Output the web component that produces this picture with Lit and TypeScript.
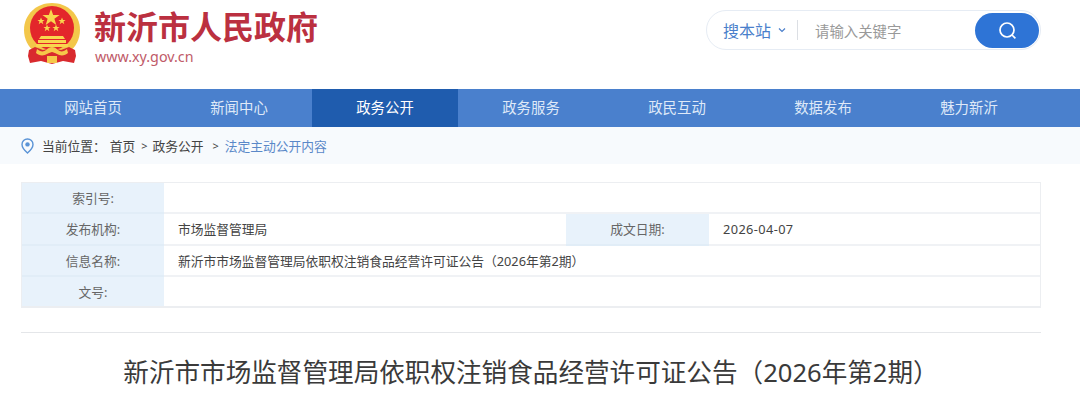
import { LitElement, html, css } from "lit";
import { customElement } from "lit/decorators.js";

const NAV = ["网站首页", "新闻中心", "政务公开", "政务服务", "政民互动", "数据发布", "魅力新沂"];

@customElement("app-root")
export class AppRoot extends LitElement {
  static styles = css`
    :host { display: block; width: 1080px; height: 400px; overflow: hidden; background: #fff;
      font-family: "Noto Sans", "Noto Sans CJK SC", sans-serif; color: #333; }
    .wrap { width: 1020px; margin-left: 21px; }
    .header { height: 89px; display: flex; justify-content: space-between; align-items: flex-start; }
    .brand { display: flex; gap: 13px; padding-top: 2px; }
    .emblem { width: 60px; height: 62px; display: block; }
    .brand-text { display: flex; flex-direction: column; }
    .name { font-family: "Noto Sans CJK SC", sans-serif; font-weight: 700; font-size: 32px; line-height: 44px; margin-top: 1px; color: #bb3040; white-space: nowrap; }
    .url { font-size: 14.3px; line-height: 18px; margin: 1px 0 0 1px; color: #c05a68; }
    .search { box-sizing: border-box; width: 335px; height: 40px; margin-top: 10px; border: 1px solid #e6ecf4; border-radius: 20px; display: flex; align-items: center; padding: 0 1px 0 16px; }
    .scope { font-size: 16px; color: #4a7fcb; white-space: nowrap; }
    .chev { width: 8px; height: 6px; margin: 0 11px 0 7px; }
    .sep { width: 1px; height: 20px; background: #dcdfe4; }
    .ph { flex: 1; font-size: 14.4px; color: #999; margin-left: 17px; }
    .btn { width: 64px; height: 35px; border-radius: 18px; background: #2e74d6; display: flex; align-items: center; justify-content: center; }
    .btn svg { width: 19px; height: 19px; }
    .nav { height: 38px; background: #4a80cd; }
    .nav-in { display: grid; grid-template-columns: repeat(7, 146px); padding-left: 20px; }
    .nav-item { height: 38px; line-height: 38px; text-align: center; font-size: 14.4px; color: #dfe9f8; }
    .nav-item.on { background: #1f5cae; color: #fff; }
    .crumb { height: 37px; background: #f7fafd; font-size: 12.75px; color: #444; }
    .crumb-in { height: 37px; display: flex; align-items: center; }
    .pin { width: 13px; height: 16px; margin-right: 8px; }
    .here { margin-right: 4px; }
    .arrow { margin: 0 5px 0 6px; font-size: 11px; }
    .arrow.wide { margin: 0 6px 0 9px; }
    .cur { color: #5a88c8; }
    .table { margin-top: 18px; border: 1px solid #eceef1; border-bottom-width: 2px; box-sizing: border-box; height: 126px; display: grid; grid-template-columns: 142px 402px 143px 1fr; grid-template-rows: 31px 32px 31px 29px; font-size: 12.75px; }
    .c { display: flex; align-items: center; border-bottom: 2px solid #f0f2f5; box-sizing: border-box; padding: 0 0 1px 14px; color: #444; white-space: nowrap; }
    .c.last { border-bottom: none; }
    .l { justify-content: center; padding: 0 0 1px; background: #e8f2fb; color: #666; border-bottom-color: #e1edf7; }
    .span3 { grid-column: span 3; }
    .date { letter-spacing: 0.4px; }
    .rule { height: 1px; background: #e4e6e9; margin-top: 24px; }
    h1 { margin: 20px 0 0; font-weight: 400; font-size: 25.6px; line-height: 40px; text-align: center; color: #3a3a3a; white-space: nowrap; }
  `;

  render() {
    return html`
      <div class="wrap header">
        <div class="brand">
          <svg class="emblem" viewBox="0 0 60 62">
            <path d="M31 1C16 1 3 12 3 28c0 9 4 17 11 22h34c7-5 11-13 11-22C59 12 46 1 31 1z" fill="#f3c74a"/>
            <circle cx="31" cy="26" r="22" fill="#e3262b"/>
            <polygon fill="#f9d64e" points="30,7 32.2,13 38.6,13 33.4,16.8 35.3,23 30,19.3 24.7,23 26.6,16.8 21.4,13 27.8,13"/>
            <polygon fill="#f9d64e" points="20,15.5 21,18 23.6,18 21.5,19.6 22.3,22.2 20,20.6 17.7,22.2 18.5,19.6 16.4,18 19,18"/>
            <polygon fill="#f9d64e" points="41,15.5 42,18 44.6,18 42.5,19.6 43.3,22.2 41,20.6 38.7,22.2 39.5,19.6 37.4,18 40,18"/>
            <polygon fill="#f9d64e" points="26,22.5 27,25 29.6,25 27.5,26.6 28.3,29.2 26,27.6 23.7,29.2 24.5,26.6 22.4,25 25,25"/>
            <polygon fill="#f9d64e" points="35,22.5 36,25 38.6,25 36.5,26.6 37.3,29.2 35,27.6 32.7,29.2 33.5,26.6 31.4,25 34,25"/>
            <path d="M20 34h22l2 3h-26zM17 38h28v3H17zM15 42h32v3H15z" fill="#f9d64e"/>
            <path d="M8 48l6-3 8 3 9-2 9 2 8-3 6 3 1 6-2 7-11-2-11 3-11-3-11 2-2-7z" fill="#d92a2e"/>
            <path d="M16 47c3 3 7 3 9 1 2-2 4-3 6-3s4 1 6 3c2 2 6 2 9-1l1 4c-3 3-8 3-11 1-2-1-4-2-5-2s-3 1-5 2c-3 2-8 2-11-1z" fill="#f6c94a"/>
            <rect x="26" y="54" width="10" height="7" fill="#f6c94a"/>
          </svg>
          <div class="brand-text">
            <div class="name">新沂市人民政府</div>
            <div class="url">www.xy.gov.cn</div>
          </div>
        </div>
        <div class="search">
          <span class="scope">搜本站</span>
          <svg class="chev" viewBox="0 0 8 6"><path d="M1 1.5l3 3 3-3" fill="none" stroke="#4a7fcb" stroke-width="1.2"/></svg>
          <span class="sep"></span>
          <span class="ph">请输入关键字</span>
          <span class="btn">
            <svg viewBox="0 0 19 19"><circle cx="9" cy="9" r="7" fill="none" stroke="#fff" stroke-width="1.7"/><path d="M14 14l3.4 3.4" stroke="#fff" stroke-width="1.7" fill="none"/></svg>
          </span>
        </div>
      </div>
      <div class="nav">
        <div class="nav-in">
          ${NAV.map((n, i) => html`<div class="nav-item ${i === 2 ? "on" : ""}">${n}</div>`)}
        </div>
      </div>
      <div class="crumb">
        <div class="wrap crumb-in">
          <svg class="pin" viewBox="0 0 13 16">
            <path d="M6.5 1C3.4 1 1 3.4 1 6.4 1 10 6.5 15 6.5 15S12 10 12 6.4C12 3.4 9.6 1 6.5 1z" fill="none" stroke="#5a93d6" stroke-width="1.4"/>
            <circle cx="6.5" cy="6.4" r="2.2" fill="#5a93d6"/>
          </svg>
          <span class="here">当前位置：</span>
          <span>首页</span><span class="arrow">&gt;</span><span>政务公开</span><span class="arrow wide">&gt;</span><span class="cur">法定主动公开内容</span>
        </div>
      </div>
      <div class="wrap">
        <div class="table">
          <div class="c l">索引号:</div><div class="c span3"></div>
          <div class="c l">发布机构:</div><div class="c">市场监督管理局</div>
          <div class="c l">成文日期:</div><div class="c date">2026-04-07</div>
          <div class="c l">信息名称:</div><div class="c span3">新沂市市场监督管理局依职权注销食品经营许可证公告（2026年第2期）</div>
          <div class="c l last">文号:</div><div class="c span3 last"></div>
        </div>
        <div class="rule"></div>
        <h1>新沂市市场监督管理局依职权注销食品经营许可证公告（2026年第2期）</h1>
      </div>
    `;
  }
}
